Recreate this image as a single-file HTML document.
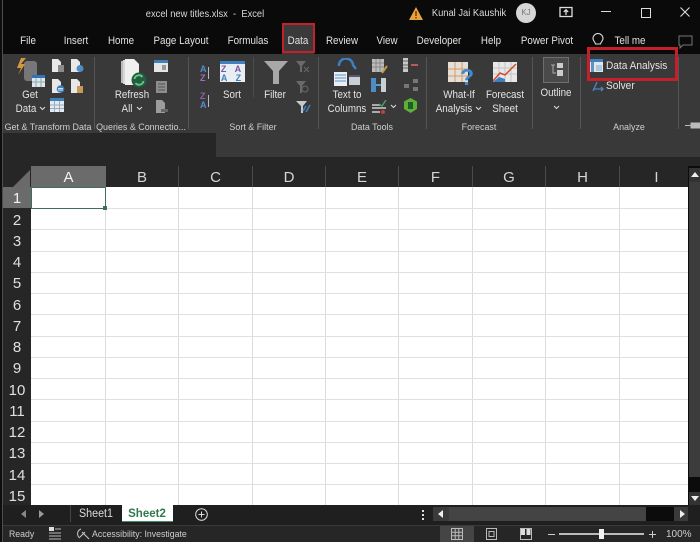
<!DOCTYPE html>
<html><head><meta charset="utf-8">
<style>
html,body{margin:0;padding:0;background:#000}
#p{position:relative;width:700px;height:542px;overflow:hidden;background:#0a0a0a;font-family:"Liberation Sans",sans-serif;color:#e4e4e4}
#p div,#p svg{position:absolute}
.t{font-size:11px;line-height:13px;white-space:nowrap;transform:translateX(-50%) scaleX(.89)}
.tab{top:35px;color:#e2e2e2}
.g{color:#cfcfcf;font-size:9.5px;top:121px;transform:translateX(-50%) scaleX(.94)}
.l{white-space:nowrap;transform-origin:0 50%;transform:scaleX(.92)}
.sep{top:57px;width:1px;height:72px;background:#555}
.ch{top:166px;height:21px;font-size:15px;line-height:24px;text-align:center;color:#d5d5d5;border-right:1px solid #4a4a4a;box-sizing:border-box}
.rh{left:3px;width:28px;font-size:15px;text-align:center;color:#e0e0e0;line-height:23px;height:21px}
.vl{top:187px;width:1px;height:318px;background:#dcdcdc}
.hl{left:31px;width:657px;height:1px;background:#e0e0e0}
</style></head><body><div id="p">
<div style="left:0;top:0;width:700px;height:54px;background:#0a0a0a"></div>
<div class="t" style="left:205px;top:8px;color:#d8d8d8;font-size:10.5px">excel new titles.xlsx &nbsp;-&nbsp; Excel</div>
<svg style="left:408px;top:6px" width="16" height="15"><path d="M8 1L15 14H1Z" fill="#e8a33d"/><path d="M7.3 5h1.4v5H7.3zM7.3 11h1.4v1.5H7.3z" fill="#5a3a10"/></svg>
<div class="t" style="left:469px;top:7px;font-size:10.5px;color:#dcdcdc">Kunal Jai Kaushik</div>
<div style="left:516px;top:3px;width:20px;height:20px;border-radius:50%;background:#d6d6d6;color:#777;font-size:8px;line-height:20px;text-align:center">KJ</div>
<svg style="left:559px;top:6px" width="14" height="12" fill="none" stroke="#ddd"><rect x="1" y="1.5" width="12" height="9" stroke-width="1.3"/><path d="M7 9V4M4.8 6L7 3.8 9.2 6" stroke-width="1.3"/></svg>
<div style="left:601px;top:11px;width:10px;height:1px;background:#ddd"></div>
<div style="left:641px;top:8px;width:8px;height:8px;border:1px solid #ddd"></div>
<svg style="left:680px;top:7px" width="10" height="10" stroke="#ddd" stroke-width="1.1"><path d="M0.5 0.5L9.5 9.5M9.5 0.5L0.5 9.5"/></svg>

<div class="t tab" style="left:28px">File</div>
<div class="t tab" style="left:76px">Insert</div>
<div class="t tab" style="left:121px">Home</div>
<div class="t tab" style="left:181px">Page Layout</div>
<div class="t tab" style="left:248px">Formulas</div>
<div style="left:282px;top:23px;width:32px;height:31px;background:#3a3a3a"></div>
<div class="t tab" style="left:298px">Data</div>
<div style="left:282px;top:23px;width:33px;height:30px;border:2px solid #c4202c;box-sizing:border-box"></div>
<div class="t tab" style="left:342px">Review</div>
<div class="t tab" style="left:387px">View</div>
<div class="t tab" style="left:439px">Developer</div>
<div class="t tab" style="left:491px">Help</div>
<div class="t tab" style="left:547px">Power Pivot</div>
<svg style="left:591px;top:33px" width="14" height="15" fill="none" stroke="#ddd" stroke-width="1.1"><path d="M4.5 11C4 8.5 2 8 2 5.5A5 5 0 0 1 12 5.5C12 8 10 8.500 9.500 11Z"/></svg>
<div class="t tab" style="left:630px">Tell me</div>
<svg style="left:678px;top:35px" width="15" height="14" fill="none" stroke="#777"><path d="M1 1H14V10H5L2 13V10H1Z"/></svg>

<div style="left:3px;top:54px;width:697px;height:79px;background:#393939"></div>
<div style="left:216px;top:133px;width:484px;height:24px;background:#393939"></div>
<div style="left:3px;top:133px;width:213px;height:33px;background:#262626"></div>
<div style="left:216px;top:157px;width:484px;height:9px;background:#262626"></div>
<div style="left:0;top:0;width:2px;height:542px;background:#0e0e0e"></div>
<div style="left:2px;top:0;width:1px;height:542px;background:#4e4e4e"></div>

<div class="sep" style="left:94px"></div><div class="sep" style="left:188px"></div><div class="sep" style="left:318px"></div>
<div class="sep" style="left:426px"></div><div class="sep" style="left:532px"></div><div class="sep" style="left:580px"></div><div class="sep" style="left:678px"></div>
<div class="sep" style="left:253px;height:40px;background:#4c4c4c"></div>

<!-- Get data -->
<svg style="left:15px;top:58px" width="30" height="30"><rect x="9" y="3" width="13" height="20" rx="3" fill="#777"/><path d="M11 0H6L2 10H6L3 17L10 6H6Z" fill="#d29a3e"/><rect x="17" y="17" width="13" height="12" fill="#dfe7ee"/><rect x="17" y="17" width="13" height="3" fill="#2f74b8"/><path d="M21 20v9M26 20v9M17 24h13" stroke="#8aa"/></svg>
<svg style="left:52px;top:59px" width="13" height="14"><path d="M0 0H6L9 3V13H0Z" fill="#e8e8e8"/><rect x="6" y="6" width="6" height="7" fill="#8a8a8a"/></svg>
<svg style="left:71px;top:59px" width="13" height="14"><path d="M0 0H6L9 3V13H0Z" fill="#e8e8e8"/><circle cx="9" cy="9.500" r="3.500" fill="#4b8fc9"/></svg>
<svg style="left:52px;top:79px" width="13" height="15"><path d="M0 0H6L9 3V14H0Z" fill="#e8e8e8"/><circle cx="8.500" cy="10" r="3.800" fill="#3b83c0"/><path d="M6 9.500h5M6 11h5" stroke="#dde"/></svg>
<svg style="left:71px;top:79px" width="13" height="15"><path d="M0 0H6L9 3V14H0Z" fill="#e8e8e8"/><rect x="6" y="7" width="6" height="7" fill="#c79a5a"/></svg>
<svg style="left:50px;top:98px" width="14" height="14"><rect width="14" height="14" fill="#e3eaf1"/><rect width="14" height="3" fill="#3f7fbb"/><path d="M4.500 3v11M9.500 3v11M0 7h14M0 10.500h14" stroke="#9ab"/></svg>
<div class="t" style="left:30px;top:89px">Get</div>
<div class="t" style="left:26px;top:103px">Data</div>
<svg style="left:39px;top:106px" width="7" height="5" fill="none" stroke="#ddd"><path d="M1 1L3.500 3.500L6 1"/></svg>
<div class="t g" style="left:48px">Get &amp; Transform Data</div>

<!-- Refresh -->
<svg style="left:120px;top:59px" width="28" height="30"><path d="M1 2H11V24H1Z" fill="#bbb"/><path d="M3 1H13V25H3Z" fill="#d8d8d8"/><path d="M5 0H14L19 5V26H5Z" fill="#f0f0f0"/><circle cx="19" cy="21" r="7.500" fill="#1f5f3d"/><path d="M14.500 20A4.500 4.500 0 0 1 22.500 18M23.500 22A4.500 4.500 0 0 1 15.500 24" stroke="#6fc48e" stroke-width="1.800" fill="none"/></svg>
<svg style="left:154px;top:60px" width="14" height="12"><rect width="14" height="12" fill="#e6e6e6"/><rect width="14" height="3" fill="#3f7fbb"/><rect x="8" y="5" width="4" height="5" fill="#999"/></svg>
<svg style="left:156px;top:81px" width="11" height="12"><rect width="11" height="12" fill="#8e8e8e"/><path d="M2 3h7M2 6h7M2 9h7" stroke="#555"/></svg>
<svg style="left:156px;top:100px" width="12" height="13"><path d="M0 0H6L9 3V13H0Z" fill="#9c9c9c"/><rect x="5" y="9" width="7" height="3" fill="#666"/></svg>
<div class="t" style="left:132px;top:89px">Refresh</div>
<div class="t" style="left:127px;top:103px">All</div>
<svg style="left:136px;top:106px" width="7" height="5" fill="none" stroke="#ddd"><path d="M1 1L3.500 3.500L6 1"/></svg>
<div class="t g" style="left:141px">Queries &amp; Connectio...</div>

<!-- Sort -->
<div style="left:200px;top:65px;font-size:9px;line-height:9px;color:#4f8fd0;font-weight:bold">A<br><span style="color:#9a6fc0">Z</span></div>
<div style="left:208px;top:67px;width:1px;height:12px;background:#bbb"></div>
<div style="left:200px;top:92px;font-size:9px;line-height:9px;color:#8a5fb0;font-weight:bold">Z<br><span style="color:#4f8fd0">A</span></div>
<div style="left:208px;top:95px;width:1px;height:12px;background:#bbb"></div>
<div style="left:220px;top:61px;width:25px;height:21px;background:#e9eef3;border-top:3px solid #3f80c0;font-size:9px;line-height:9px;color:#7a55a8;text-align:center;font-weight:bold;box-sizing:border-box;letter-spacing:3px;padding-top:1px">Z A<br><span style="color:#3f80c0">A Z</span></div>
<div class="t" style="left:232px;top:89px">Sort</div>
<svg style="left:263px;top:60px" width="26" height="25"><path d="M1 1H25L16 11V24H10V11Z" fill="#a8a8a8"/></svg>
<div class="t" style="left:275px;top:89px">Filter</div>
<svg style="left:295px;top:60px" width="15" height="13"><path d="M1 1H11L7 6V12H5V6Z" fill="#6a6a6a"/><path d="M9 7L14 12M14 7L9 12" stroke="#6a6a6a"/></svg>
<svg style="left:295px;top:80px" width="15" height="14"><path d="M1 1H11L7 6V13H5V6Z" fill="#6a6a6a"/><circle cx="10" cy="9" r="3" fill="none" stroke="#6a6a6a"/></svg>
<svg style="left:295px;top:100px" width="16" height="14"><path d="M1 1H12L8 6V13H6V6Z" fill="#c8c8c8"/><path d="M8 11L11 6M11 12L15 5" stroke="#3f80c0" stroke-width="1.500"/></svg>
<div class="t g" style="left:253px">Sort &amp; Filter</div>

<!-- Data tools -->
<svg style="left:333px;top:58px" width="28" height="30"><path d="M6 8A7 7 0 0 1 20 7L23 11" stroke="#3d7fc0" stroke-width="2.500" fill="none"/><rect x="1" y="14" width="13" height="14" fill="#e8eef3"/><path d="M2 17h11M2 20h11M2 23h11" stroke="#5a94c8"/><rect x="16" y="17" width="11" height="10" fill="#c8ced4"/><rect x="16" y="17" width="11" height="2" fill="#557"/></svg>
<div class="t" style="left:347px;top:89px">Text to</div>
<div class="t" style="left:347px;top:103px">Columns</div>
<svg style="left:372px;top:59px" width="16" height="15"><rect width="12" height="13" fill="#bcbcbc"/><path d="M4 0v13M8 0v13M0 4h12M0 8h12" stroke="#888"/><path d="M10 14L15 7" stroke="#c69a44" stroke-width="2"/></svg>
<svg style="left:371px;top:78px" width="16" height="15"><rect width="5" height="14" fill="#4d8cc8"/><rect x="10" width="5" height="14" fill="#c7ced6"/><path d="M5 7h5" stroke="#5a9ad0" stroke-width="2"/></svg>
<svg style="left:372px;top:100px" width="15" height="14"><path d="M0 5h8M0 8h14M0 12h8" stroke="#d0d0d0" stroke-width="1.500"/><path d="M7 4L10 6L14 0" stroke="#4aa86b" fill="none" stroke-width="1.300"/><circle cx="11" cy="12" r="2" fill="#c04040"/></svg>
<svg style="left:390px;top:104px" width="7" height="5" fill="none" stroke="#ddd"><path d="M1 1L3.500 3.500L6 1"/></svg>
<svg style="left:403px;top:58px" width="16" height="15"><rect width="5" height="14" fill="#c8c8c8"/><path d="M0 3h5M0 7h5M0 10h5" stroke="#666"/><rect x="8" y="6" width="7" height="2" fill="#c05a5a"/></svg>
<svg style="left:404px;top:79px" width="14" height="13" fill="#777"><rect y="5" width="5" height="4"/><rect x="9" width="5" height="4"/><rect x="9" y="8" width="5" height="4"/></svg>
<svg style="left:403px;top:98px" width="15" height="15"><path d="M7.500 0L14 3.500V11L7.500 15L1 11V3.500Z" fill="#5fae3a"/><rect x="5" y="4" width="5" height="7" fill="#1d5f2c"/></svg>
<div class="t g" style="left:372px">Data Tools</div>

<!-- Forecast -->
<svg style="left:448px;top:62px" width="28" height="26"><rect x="0" width="20" height="20" fill="#e6dfd6"/><path d="M7 0v20M14 0v20M0 7h20M0 14h20" stroke="#d49a6a"/><text x="12" y="23" font-family="Liberation Sans" font-size="23" font-weight="bold" fill="#3f8ad0">?</text></svg>
<div class="t" style="left:459px;top:89px">What-If</div>
<div class="t" style="left:454px;top:103px">Analysis</div>
<svg style="left:475px;top:106px" width="7" height="5" fill="none" stroke="#ddd"><path d="M1 1L3.500 3.500L6 1"/></svg>
<svg style="left:493px;top:62px" width="24" height="21"><rect width="24" height="20" fill="#e8e8e8"/><path d="M6 0v20M12 0v20M18 0v20M0 6h24M0 12h24" stroke="#c4c4c4"/><path d="M0 19L7 11L12 13L16 9L23 2" stroke="#d04a30" stroke-width="1.500" fill="none"/><path d="M0 20L6 15L12 17V20Z" fill="#3d80c0"/></svg>
<div class="t" style="left:505px;top:89px">Forecast</div>
<div class="t" style="left:505px;top:103px">Sheet</div>
<div class="t g" style="left:479px">Forecast</div>

<!-- Outline -->
<div style="left:543px;top:57px;width:26px;height:26px;background:#4a4a4a;border:1px solid #6e6e6e;box-sizing:border-box"></div>
<svg style="left:550px;top:63px" width="14" height="14"><rect x="7" width="6" height="5" fill="#ccc"/><rect x="7" y="7" width="6" height="6" fill="#ccc"/><path d="M1 2H5M3 2V10H6" stroke="#aaa" fill="none"/></svg>
<div class="t" style="left:556px;top:87px">Outline</div>
<svg style="left:553px;top:105px" width="7" height="5" fill="none" stroke="#ddd"><path d="M1 1L3.500 3.500L6 1"/></svg>

<!-- Analyze -->
<svg style="left:590px;top:59px" width="14" height="14"><rect width="13" height="13" fill="#e6e6e6"/><rect width="13" height="3" fill="#3f80c0"/><rect x="1" y="3" width="3" height="10" fill="#5a94c8"/><rect x="6" y="6" width="6" height="6" fill="#a8c8e4"/></svg>
<div class="l" style="left:606px;top:60px;font-size:11px;line-height:13px">Data Analysis</div>
<svg style="left:592px;top:81px" width="12" height="11" fill="none" stroke="#4a86c0" stroke-width="1.300"><path d="M1 10L5 1M1 8H11M9 6L11 8L9 10"/></svg>
<div class="l" style="left:606px;top:80px;font-size:11px;line-height:13px">Solver</div>
<div class="t g" style="left:629px">Analyze</div>
<div style="left:587px;top:47px;width:91px;height:34px;border:3px solid #c4202c;box-sizing:border-box"></div>
<svg style="left:685px;top:121px" width="15" height="9"><path d="M0 4.500H6M6 1.500V7.500M6 2H15V7H6" fill="#bbb" stroke="#bbb"/></svg>

<!-- Grid -->
<div style="left:3px;top:166px;width:697px;height:21px;background:#262626"></div>
<svg style="left:13px;top:170px" width="18" height="17"><path d="M17 0V17H0Z" fill="#6a6a6a"/></svg>
<div class="ch" style="left:31px;width:75px;background:#6b6b6b;color:#f2f2f2;border:0">A</div>
<div class="ch" style="left:106px;width:73px">B</div>
<div class="ch" style="left:179px;width:74px">C</div>
<div class="ch" style="left:253px;width:73px">D</div>
<div class="ch" style="left:326px;width:73px">E</div>
<div class="ch" style="left:399px;width:74px">F</div>
<div class="ch" style="left:473px;width:73px">G</div>
<div class="ch" style="left:546px;width:74px">H</div>
<div class="ch" style="left:620px;width:73px;border:0">I</div>
<div style="left:688px;top:166px;width:12px;height:21px;background:#262626"></div>

<div style="left:31px;top:187px;width:657px;height:318px;background:#fff"></div>
<div style="left:3px;top:187px;width:28px;height:318px;background:#262626"></div>
<div class="vl" style="left:105px"></div><div class="vl" style="left:178px"></div><div class="vl" style="left:252px"></div><div class="vl" style="left:325px"></div><div class="vl" style="left:398px"></div><div class="vl" style="left:472px"></div><div class="vl" style="left:545px"></div><div class="vl" style="left:619px"></div>
<div class="hl" style="top:208px"></div><div class="hl" style="top:229px"></div><div class="hl" style="top:251px"></div><div class="hl" style="top:272px"></div><div class="hl" style="top:293px"></div><div class="hl" style="top:314px"></div><div class="hl" style="top:336px"></div><div class="hl" style="top:357px"></div><div class="hl" style="top:378px"></div><div class="hl" style="top:399px"></div><div class="hl" style="top:421px"></div><div class="hl" style="top:442px"></div><div class="hl" style="top:463px"></div><div class="hl" style="top:484px"></div>

<div class="rh" style="top:187px;background:#6b6b6b;color:#f2f2f2">1</div>
<div class="rh" style="top:209px">2</div><div class="rh" style="top:230px">3</div><div class="rh" style="top:251px">4</div><div class="rh" style="top:272px">5</div><div class="rh" style="top:294px">6</div><div class="rh" style="top:315px">7</div><div class="rh" style="top:336px">8</div><div class="rh" style="top:357px">9</div><div class="rh" style="top:379px">10</div><div class="rh" style="top:400px">11</div><div class="rh" style="top:421px">12</div><div class="rh" style="top:442px">13</div><div class="rh" style="top:464px">14</div><div class="rh" style="top:485px">15</div>

<div style="left:31px;top:187px;width:75px;height:22px;border:1px solid #3f6f58;box-sizing:border-box;background:#fff"></div>
<div style="left:103px;top:206px;width:4px;height:4px;background:#3f6f58"></div>

<!-- V scrollbar -->
<div style="left:688px;top:166px;width:12px;height:339px;background:#0c0c0c"></div>
<div style="left:689px;top:168px;width:11px;height:14px;background:#333"></div>
<svg style="left:691px;top:172px" width="8" height="5"><path d="M0 5L4 0L8 5Z" fill="#eee"/></svg>
<div style="left:689px;top:182px;width:11px;height:295px;background:#3c3c3c"></div>
<div style="left:689px;top:492px;width:11px;height:13px;background:#333"></div>
<svg style="left:691px;top:496px" width="8" height="5"><path d="M0 0L4 5L8 0Z" fill="#eee"/></svg>

<!-- Tabs -->
<div style="left:3px;top:505px;width:697px;height:20px;background:#1f1f1f"></div>
<svg style="left:20px;top:510px" width="7" height="8"><path d="M6 0V8L1 4Z" fill="#888"/></svg>
<svg style="left:38px;top:510px" width="7" height="8"><path d="M1 0V8L6 4Z" fill="#999"/></svg>
<div style="left:70px;top:505px;width:1px;height:17px;background:#444"></div>
<div class="t" style="left:96px;top:508px;font-size:11.500px;color:#dcdcdc;transform:translateX(-50%) scaleX(.93)">Sheet1</div>
<div style="left:122px;top:505px;width:51px;height:16px;background:#fff"></div>
<div style="left:122px;top:521px;width:51px;height:1px;background:#3f8f62"></div>
<div class="t" style="left:147px;top:508px;font-size:11.500px;font-weight:bold;color:#2f7a50;transform:translateX(-50%)">Sheet2</div>
<svg style="left:195px;top:508px" width="13" height="13" fill="none" stroke="#ddd"><circle cx="6.500" cy="6.500" r="5.800"/><path d="M6.500 3.500v6M3.500 6.500h6"/></svg>
<div style="left:422px;top:510px;width:2px;height:2px;background:#ddd;box-shadow:0 4px #ddd,0 8px #ddd"></div>
<div style="left:433px;top:507px;width:16px;height:14px;background:#3a3a3a"></div>
<svg style="left:438px;top:510px" width="6" height="8"><path d="M5 0V8L0 4Z" fill="#eee"/></svg>
<div style="left:449px;top:507px;width:197px;height:14px;background:#444"></div>
<div style="left:646px;top:507px;width:28px;height:14px;background:#0c0c0c"></div>
<div style="left:674px;top:507px;width:14px;height:14px;background:#3a3a3a"></div>
<svg style="left:679px;top:510px" width="6" height="8"><path d="M1 0V8L6 4Z" fill="#eee"/></svg>

<!-- Status -->
<div style="left:3px;top:525px;width:697px;height:17px;background:#262626;border-top:1px solid #3a3a3a;box-sizing:border-box"></div>
<div class="l" style="left:9px;top:529px;font-size:9.500px;line-height:12px;color:#cfcfcf">Ready</div>
<svg style="left:49px;top:527px" width="12" height="13"><rect x="0" y="0" width="5" height="4" fill="#ddd"/><path d="M6 2h6M0 6h12M0 9h12M0 12h12" stroke="#bbb"/></svg>
<svg style="left:77px;top:528px" width="13" height="12" fill="none" stroke="#ccc"><path d="M4 1A5 5 0 0 0 3 10M5 4L12 11M8 4L3 9"/></svg>
<div class="l" style="left:92px;top:529px;font-size:9.500px;line-height:12px;color:#cfcfcf">Accessibility: Investigate</div>
<div style="left:440px;top:526px;width:34px;height:16px;background:#454545"></div>
<svg style="left:451px;top:528px" width="12" height="12" fill="none" stroke="#bbb"><path d="M.5.500h11v11H.5zM4.200.500v11M7.800.500v11M.5 4.200h11M.5 7.800h11"/></svg>
<svg style="left:486px;top:528px" width="11" height="12" fill="none" stroke="#bbb"><path d="M.5.500h10v11H.5zM3 3.500h5v5H3z"/></svg>
<svg style="left:520px;top:528px" width="12" height="12"><rect x=".5" y=".5" width="11" height="11" fill="none" stroke="#bbb"/><rect x="1" y="1" width="4" height="6" fill="#ddd"/><rect x="6.500" y="1" width="4" height="6" fill="#ddd"/></svg>
<div style="left:548px;top:534px;width:7px;height:1px;background:#ccc"></div>
<div style="left:559px;top:533px;width:85px;height:2px;background:#bbb"></div>
<div style="left:599px;top:529px;width:5px;height:10px;background:#f2f2f2"></div>
<div style="left:649px;top:534px;width:7px;height:1px;background:#ccc"></div><div style="left:652px;top:531px;width:1px;height:7px;background:#ccc"></div>
<div style="left:666px;top:529px;font-size:10px;line-height:12px;color:#cfcfcf">100%</div>
</div></body></html>
